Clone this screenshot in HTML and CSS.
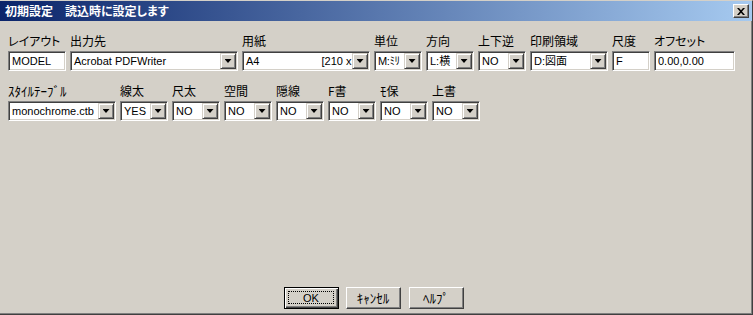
FILE: index.html
```html
<!DOCTYPE html>
<html lang="ja">
<head>
    <meta charset="UTF-8">
    <title>初期設定</title>
    <link rel="stylesheet" href="styles.css">
</head>
<body>
    <div class="window">
        <div class="titlebar">
            <span class="title">初期設定　読込時に設定します</span>
            <span class="close">
                <svg width="8" height="7" viewBox="0 0 8 7"><path d="M0 0h2l2 2.2L6 0h2L5 3.5 8 7H6L4 4.8 2 7H0l3-3.5z" fill="#000"/></svg>
            </span>
        </div>
        <div class="client">
            <div class="row">
                <div class="field w-layout"><label>レイアウト</label><div class="edit">MODEL</div></div>
                <div class="field w-device"><label>出力先</label><div class="combo"><span class="value">Acrobat PDFWriter</span><span class="drop"></span></div></div>
                <div class="field w-paper"><label>用紙</label><div class="combo"><span class="value">A4<span class="paper-size">[210 x</span></span><span class="drop"></span></div></div>
                <div class="field w-small"><label>単位</label><div class="combo"><span class="value narrow">M:ﾐﾘ</span><span class="drop"></span></div></div>
                <div class="field w-small"><label>方向</label><div class="combo"><span class="value">L:横</span><span class="drop"></span></div></div>
                <div class="field w-small"><label>上下逆</label><div class="combo"><span class="value">NO</span><span class="drop"></span></div></div>
                <div class="field w-area"><label>印刷領域</label><div class="combo"><span class="value">D:図面</span><span class="drop"></span></div></div>
                <div class="field w-scale"><label>尺度</label><div class="edit">F</div></div>
                <div class="field w-offset"><label>オフセット</label><div class="edit">0.00,0.00</div></div>
            </div>
            <div class="row">
                <div class="field w-style"><label class="hw">ｽﾀｲﾙﾃｰﾌﾞﾙ</label><div class="combo"><span class="value">monochrome.ctb</span><span class="drop"></span></div></div>
                <div class="field w-small"><label>線太</label><div class="combo"><span class="value">YES</span><span class="drop"></span></div></div>
                <div class="field w-small"><label>尺太</label><div class="combo"><span class="value">NO</span><span class="drop"></span></div></div>
                <div class="field w-small"><label>空間</label><div class="combo"><span class="value">NO</span><span class="drop"></span></div></div>
                <div class="field w-small"><label>隠線</label><div class="combo"><span class="value">NO</span><span class="drop"></span></div></div>
                <div class="field w-small"><label>F書</label><div class="combo"><span class="value">NO</span><span class="drop"></span></div></div>
                <div class="field w-small"><label><span class="hw">ﾓ</span>保</label><div class="combo"><span class="value">NO</span><span class="drop"></span></div></div>
                <div class="field w-small"><label>上書</label><div class="combo"><span class="value">NO</span><span class="drop"></span></div></div>
            </div>
            <div class="buttons">
                <button class="btn default latin">OK</button>
                <button class="btn hw">ｷｬﾝｾﾙ</button>
                <button class="btn hw">ﾍﾙﾌﾟ</button>
            </div>
        </div>
    </div>
</body>
</html>
```

FILE: styles.css
```css
body {
    margin: 0;
    background: #d4d0c8;
    color: #000;
    font-family: "Noto Sans CJK JP", sans-serif;
    font-size: 12px;
}

.window {
    width: 753px;
    height: 315px;
    box-sizing: border-box;
    border-top: 1px solid #d4d0c8;
    border-right: 1px solid #404040;
    border-bottom: 1px solid #404040;
    display: flex;
    flex-direction: column;
}

/* title bar */
.titlebar {
    height: 20px;
    flex-shrink: 0;
    display: flex;
    align-items: center;
    padding: 0 3px 0 5px;
    background: linear-gradient(to right, #0a246a, #a6caf0);
    color: #fff;
    font-weight: bold;
}

.title {
    flex: 1;
    line-height: 14px;
    font-feature-settings: "palt";
}

.close {
    width: 16px;
    height: 14px;
    box-sizing: border-box;
    display: flex;
    align-items: center;
    justify-content: center;
    background: #d4d0c8;
    border: 1px solid;
    border-color: #fff #404040 #404040 #fff;
    box-shadow: inset -1px -1px #808080;
}

/* dialog body */
.client {
    flex: 1;
    display: flex;
    flex-direction: column;
    padding: 13px 0 4px 8px;
    border-right: 1px solid #808080;
    border-bottom: 1px solid #808080;
}

.row {
    display: flex;
    gap: 4px;
}

.row + .row {
    margin-top: 13px;
}

.field {
    display: flex;
    flex-direction: column;
}

label {
    height: 14px;
    line-height: 14px;
    margin-bottom: 3px;
    white-space: nowrap;
    font-feature-settings: "palt";
}

/* half-width katakana looks small in Noto, bump it up */
.hw {
    font-size: 13px;
}

.w-layout { width: 58px; }
.w-device { width: 168px; }
.w-paper  { width: 128px; }
.w-small  { width: 48px; }
.w-area   { width: 78px; }
.w-scale  { width: 38px; }
.w-offset { width: 81px; }
.w-style  { width: 108px; }

/* sunken edit / combo: 1px border + 1px inset shadow = 2px frame */
.edit, .combo {
    height: 20px;
    box-sizing: border-box;
    display: flex;
    align-items: center;
    padding: 1px;
    background: #fff;
    border: 1px solid;
    border-color: #808080 #fff #fff #808080;
    box-shadow: inset 1px 1px #404040, inset -1px -1px #d4d0c8;
    font-family: "Liberation Sans", "Noto Sans CJK JP", sans-serif;
    font-size: 11px;
    line-height: 16px;
    white-space: nowrap;
    overflow: hidden;
}

.edit {
    padding-left: 3px;
}

.value {
    flex: 1;
    min-width: 0;
    overflow: hidden;
    padding-left: 2px;
}

.value.narrow {
    letter-spacing: -0.4px;
}

.paper-size {
    margin-left: 62px;
}

.drop {
    width: 16px;
    height: 16px;
    flex-shrink: 0;
    box-sizing: border-box;
    display: flex;
    align-items: center;
    justify-content: center;
    background: #d4d0c8;
    border: 1px solid;
    border-color: #d4d0c8 #404040 #404040 #d4d0c8;
    box-shadow: inset 1px 1px #fff, inset -1px -1px #808080;
}

.drop::after {
    content: "";
    width: 7px;
    height: 4px;
    background: #000;
    clip-path: polygon(0 0, 100% 0, 50% 100%);
}

/* push buttons */
.buttons {
    margin-top: auto;
    margin-right: 12px;
    display: flex;
    justify-content: center;
    gap: 7px;
}

.btn {
    position: relative;
    width: 55px;
    height: 22px;
    padding: 0;
    box-sizing: border-box;
    background: #d4d0c8;
    border: 1px solid;
    border-color: #fff #404040 #404040 #fff;
    box-shadow: inset -1px -1px #808080;
    color: #000;
    font-family: "Noto Sans CJK JP", sans-serif;
    font-size: 12px;
    line-height: 18px;
}

.btn.hw {
    font-size: 13px;
}

.btn + .btn + .btn {
    margin-left: 1px;
}

.btn.latin {
    font-family: "Liberation Sans", sans-serif;
    font-size: 11px;
}

.btn.default {
    border-color: #000;
    box-shadow: inset 1px 1px #fff, inset -1px -1px #404040, inset -2px -2px #808080;
}

.btn.default::after {
    content: "";
    position: absolute;
    top: 3px;
    left: 3px;
    right: 4px;
    bottom: 4px;
    border: 1px dotted #000;
}
```
